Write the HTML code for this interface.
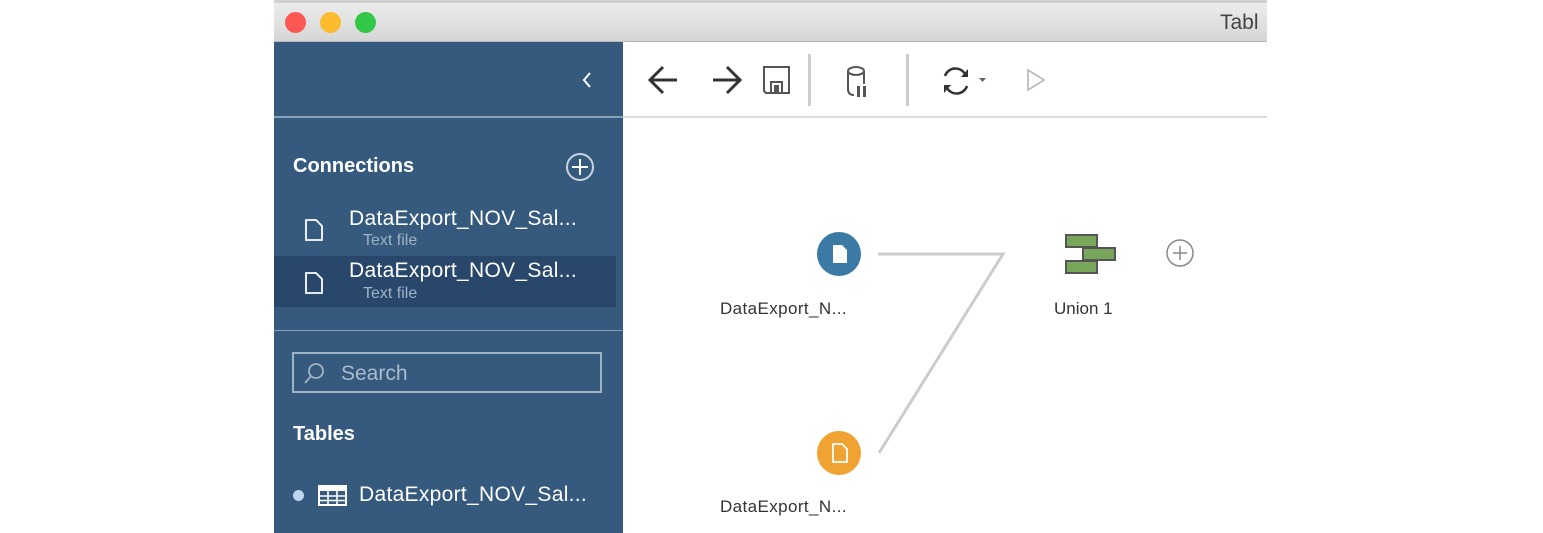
<!DOCTYPE html>
<html><head><style>
body{margin:0;width:1543px;height:533px;background:#fff;position:relative;overflow:hidden;font-family:"Liberation Sans",sans-serif}
.a{position:absolute}
.t{color:#fff;font-size:21px;letter-spacing:0.3px}
.sub{color:#9fb2c6;font-size:16px}
</style></head><body>
<div class="a" style="left:274px;top:0;width:993px;height:42px;background:linear-gradient(#ececec,#d6d6d6);border-bottom:1px solid #b8b8b8;border-top:3px solid #d0d0d0;box-sizing:border-box"></div>
<div class="a" style="left:285px;top:12px;width:21px;height:21px;border-radius:50%;background:#fc5753"></div>
<div class="a" style="left:320px;top:12px;width:21px;height:21px;border-radius:50%;background:#fdbc2e"></div>
<div class="a" style="left:355px;top:12px;width:21px;height:21px;border-radius:50%;background:#33c748"></div>
<div class="a" style="left:1220px;top:11px;font-size:21px;color:#444">Tabl</div>
<div class="a" style="left:274px;top:42px;width:349px;height:491px;background:#355a7e"></div>
<div class="a" style="left:274px;top:116px;width:349px;height:2px;background:#8aa0b6"></div>
<div class="a" style="left:274px;top:330px;width:349px;height:1px;background:#8aa0b6"></div>
<svg class="a" style="left:580px;top:70px" width="14" height="20"><path d="M10 3L4 10L10 17" stroke="#fff" stroke-width="2" fill="none"/></svg>
<div class="a" style="left:293px;top:155px;font-weight:bold;font-size:20px;color:#fff">Connections</div>
<svg class="a" style="left:565px;top:152px" width="30" height="30"><circle cx="15" cy="15" r="13" stroke="#c8d3de" stroke-width="2" fill="none"/><path d="M15 7V23M7 15H23" stroke="#fff" stroke-width="2"/></svg>
<div class="a" style="left:274px;top:256px;width:342px;height:51px;background:#28476a"></div>
<svg class="a" style="left:304px;top:218px" width="20" height="24"><path d="M2 2H12L18 8V22H2Z" stroke="#fff" stroke-width="1.8" fill="none"/></svg>
<svg class="a" style="left:304px;top:271px" width="20" height="24"><path d="M2 2H12L18 8V22H2Z" stroke="#fff" stroke-width="1.8" fill="none"/></svg>
<div class="a t" style="left:349px;top:207px">DataExport_NOV_Sal...</div>
<div class="a sub" style="left:363px;top:232px">Text file</div>
<div class="a t" style="left:349px;top:259px">DataExport_NOV_Sal...</div>
<div class="a sub" style="left:363px;top:285px">Text file</div>
<div class="a" style="left:292px;top:352px;width:310px;height:41px;border:2px solid #9fb2c6;box-sizing:border-box"></div>
<svg class="a" style="left:302px;top:362px" width="24" height="24"><circle cx="14" cy="9" r="7" stroke="#9fb2c6" stroke-width="1.8" fill="none"/><path d="M9 14L3 21" stroke="#9fb2c6" stroke-width="1.8"/></svg>
<div class="a" style="left:341px;top:362px;font-size:21px;color:#a9bccd">Search</div>
<div class="a" style="left:293px;top:423px;font-weight:bold;font-size:20px;color:#fff">Tables</div>
<div class="a" style="left:293px;top:490px;width:11px;height:11px;border-radius:50%;background:#bcd6f0"></div>
<svg class="a" style="left:318px;top:485px" width="30" height="22"><rect x="1" y="1" width="27" height="19" fill="none" stroke="#fff" stroke-width="2"/><rect x="1" y="1" width="27" height="5" fill="#fff"/><path d="M1 11H28M1 15.5H28M10 1V20M19 1V20" stroke="#fff" stroke-width="1.6"/></svg>
<div class="a t" style="left:359px;top:483px">DataExport_NOV_Sal...</div>
<div class="a" style="left:623px;top:116px;width:644px;height:2px;background:#dcdcdc"></div>
<svg class="a" style="left:623px;top:42px" width="644" height="74">
<path d="M27 38H54M40 25L27 38L40 51" stroke="#333" stroke-width="3" fill="none"/>
<path d="M90 38H117M104 25L117 38L104 51" stroke="#333" stroke-width="3" fill="none"/>
<path d="M141 25H166V51H143L141 49Z" stroke="#555" stroke-width="2" fill="none"/><rect x="148" y="40" width="11" height="11" stroke="#555" stroke-width="2" fill="none"/><rect x="151" y="43" width="5" height="7" fill="#555"/>
<rect x="185" y="12" width="3" height="52" fill="#ccc"/>
<rect x="283" y="12" width="3" height="52" fill="#ccc"/>
<path d="M225 29A8 4 0 0 0 241 29A8 4 0 0 0 225 29V47Q225 53 231 53M241 29V42" stroke="#555" stroke-width="2" fill="none"/><rect x="234" y="44" width="3" height="11" fill="#555"/><rect x="240" y="44" width="3" height="11" fill="#555"/>
<path d="M322 34A11 11 0 0 1 342 32M344 44A11 11 0 0 1 324 46" stroke="#333" stroke-width="2.5" fill="none"/><path d="M345 27V35H338Z M321 51V43H328Z" fill="#333"/>
<path d="M356 36H363L359.5 40Z" fill="#666"/>
<path d="M405 28L421 38L405 48Z" stroke="#bbb" stroke-width="1.8" fill="none"/>
</svg>
<svg class="a" style="left:623px;top:118px" width="644" height="415">
<path d="M255 136H380L256 335" stroke="#ccc" stroke-width="3" fill="none"/>
<circle cx="216" cy="136" r="22" fill="#3a7aa5"/><path d="M210 127H219L224 132V145H210Z" fill="#fff"/>
<circle cx="216" cy="335" r="22" fill="#f0a232"/><path d="M210 326H219L224 331V344H210Z" fill="none" stroke="#fff" stroke-width="1.8"/>
<rect x="443" y="117" width="31" height="12" fill="#78a65a" stroke="#555" stroke-width="2"/>
<rect x="460" y="130" width="32" height="12" fill="#78a65a" stroke="#555" stroke-width="2"/>
<rect x="443" y="143" width="31" height="12" fill="#78a65a" stroke="#555" stroke-width="2"/>
<circle cx="557" cy="135" r="13" fill="#fff" stroke="#888" stroke-width="1.5"/><path d="M557 128V142M550 135H564" stroke="#888" stroke-width="1.5"/>
</svg>
<div class="a" style="left:720px;top:299px;font-size:17px;color:#333;letter-spacing:0.4px">DataExport_N...</div>
<div class="a" style="left:1054px;top:299px;font-size:17px;color:#333">Union 1</div>
<div class="a" style="left:720px;top:497px;font-size:17px;color:#333;letter-spacing:0.4px">DataExport_N...</div>
</body></html>
